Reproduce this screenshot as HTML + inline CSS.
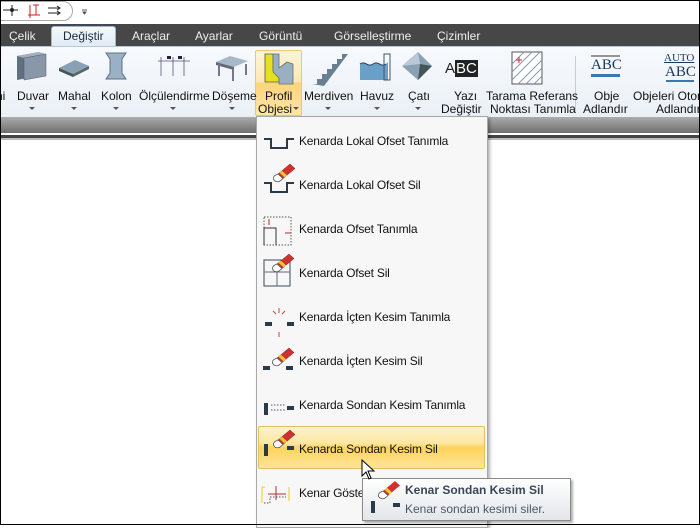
<!DOCTYPE html>
<html><head><meta charset="utf-8"><style>
*{margin:0;padding:0;box-sizing:border-box}
body{width:700px;height:525px;overflow:hidden;background:#fff;font-family:"Liberation Sans",sans-serif;font-size:12px;color:#1a1a1a;position:relative}
.abs{position:absolute}
#frame{position:absolute;left:0;top:0;width:700px;height:525px;border:1px solid #000;pointer-events:none;z-index:50}
.tab{position:absolute;top:29px;color:#eee;font-size:12px}
.lbl{position:absolute;text-align:center;font-size:12px;line-height:13px;color:#111;white-space:nowrap}
.arr{position:absolute;width:0;height:0;border-left:3px solid transparent;border-right:3px solid transparent;border-top:3px solid #555}
.mi{position:absolute;left:299px;font-size:12px;color:#111;white-space:nowrap;letter-spacing:-0.2px}
</style></head><body>
<div id="frame"></div>
<div class="abs" style="left:-10px;top:1px;width:83px;height:20px;border:1px solid #aaa;border-radius:10px;background:#fff"></div>
<svg class="abs" style="left:0;top:2px" width="90" height="20">
<g stroke="#222" fill="none"><line x1="3" y1="8" x2="18" y2="8"/><line x1="12" y1="3" x2="12" y2="14"/><circle cx="12" cy="8" r="1.5" fill="#222"/></g>
<g stroke="#c22" fill="none"><line x1="28" y1="13" x2="40" y2="13"/><line x1="30" y1="3" x2="30" y2="16"/><line x1="36" y1="3" x2="36" y2="13"/><line x1="33" y1="3" x2="39" y2="3"/></g>
<g stroke="#222" fill="none"><line x1="48" y1="6" x2="60" y2="6"/><line x1="48" y1="11" x2="60" y2="11"/><path d="M57 4l3 2-3 2M57 9l3 2-3 2"/></g>
<path d="M82 8h5M83 10h3l-1.5 2z" stroke="#555" fill="#555"/>
</svg>
<div class="abs" style="left:0;top:24px;width:700px;height:22px;background:#474747"></div>
<div class="abs" style="left:51px;top:26px;width:65px;height:21px;background:linear-gradient(#f4f8fc,#dfeaf5);border:1px solid #9eb6ce;border-bottom:none;border-radius:3px 3px 0 0"></div>
<div class="tab" style="left:9px">Çelik</div>
<div class="tab" style="left:63px;color:#1a2a40">Değiştir</div>
<div class="tab" style="left:132px">Araçlar</div>
<div class="tab" style="left:195px">Ayarlar</div>
<div class="tab" style="left:259px">Görüntü</div>
<div class="tab" style="left:334px">Görselleştirme</div>
<div class="tab" style="left:437px">Çizimler</div>
<div class="abs" style="left:0;top:46px;width:700px;height:71px;background:linear-gradient(#f7fafd,#eaf0f6);border-top:1px solid #b8c8d8"></div>
<div class="abs" style="left:255px;top:50px;width:47px;height:66px;border:1px solid #e8c870;border-radius:2px;background:linear-gradient(#fdf5d8 0%,#fbe9b0 48%,#fcd47a 50%,#fde7a8 100%)"></div>
<div class="abs" style="left:575px;top:56px;width:1px;height:56px;background:#c8ccd0"></div>
<svg class="abs" style="left:0;top:48px" width="700" height="40">
<path d="M17 8l22-4v24l-22 4z" fill="#607080"/><path d="M17 8l22-4 7 2-22 4z" fill="#a0b0c0"/><path d="M24 10l22-4v22l-22 4z" fill="#8898a8" stroke="#556" stroke-width=".5"/>
<path d="M59 20l16-8 14 6-16 8z" fill="#8aa0b4"/><path d="M59 20l14 6v3l-14-6z" fill="#455"/><path d="M73 26l16-8v3l-16 8z" fill="#566"/>
<path d="M106 5h20l-4 6v14l4 6h-20l4-6v-14z" fill="#9ab0c4" stroke="#607080"/>
<g stroke="#557" fill="none" stroke-width=".8"><line x1="158" y1="13" x2="190" y2="13"/><line x1="161" y1="9" x2="161" y2="28"/><line x1="173" y1="9" x2="173" y2="28"/><line x1="184" y1="9" x2="184" y2="28"/></g>
<rect x="167" y="8" width="4" height="3" fill="#224"/><rect x="178" y="8" width="4" height="3" fill="#224"/>
<path d="M216 14l14-6 18 5-14 6z" fill="#a8b8c8"/><path d="M216 14l18 5v3l-18-5z" fill="#667"/><rect x="218" y="16" width="2" height="12" fill="#778"/><rect x="232" y="21" width="2" height="12" fill="#778"/><rect x="245" y="16" width="2" height="11" fill="#778"/>
<path d="M265 6h8v16l6 6v6h-14z" fill="#e6e020" stroke="#555" stroke-width=".8"/><path d="M273 6h6v14l8-6 6 2v20h-14v-6l-6-6z" fill="#9ab0c0" stroke="#607080" stroke-width=".8"/>
<path d="M312 36h5v-5h5v-5h5v-5h5v-5h5v-5h5v-5h6l-24 32z" fill="#6a8090"/>
<path d="M360 16c5-4 8 4 13 0s8 4 13 0l2-2v18h-28z" fill="#6aa0c8"/><path d="M360 16c5-4 8 4 13 0s8 4 13 0" stroke="#246" fill="none"/><rect x="384" y="6" width="6" height="26" fill="none" stroke="#456"/>
<path d="M402 18l16-14 14 14-14 14z" fill="#8aa0b4"/><path d="M402 18l16-14 2 12z" fill="#b8c8d8"/><path d="M418 32l2-16 12 2z" fill="#455"/>
<rect x="512" y="4" width="30" height="32" fill="#fff" stroke="#555"/>
<g stroke="#8898b0"><line x1="512" y1="16" x2="524" y2="4"/><line x1="512" y1="24" x2="532" y2="4"/><line x1="512" y1="32" x2="540" y2="4"/><line x1="518" y1="36" x2="542" y2="12"/><line x1="526" y1="36" x2="542" y2="20"/><line x1="534" y1="36" x2="542" y2="28"/></g>
<path d="M516 12h6M519 9v6" stroke="#d22"/>
<rect x="591" y="26" width="29" height="3" fill="#3a78b0"/><line x1="591" y1="8" x2="620" y2="8" stroke="#333"/>
<rect x="666" y="32" width="28" height="2" fill="#3a78b0"/>
</svg>
<div class="abs" style="left:445px;top:60px;font-size:15px;color:#222">A<span style="background:#222;color:#fff;padding:0 1px">BC</span></div>
<div class="abs" style="left:591px;top:57px;font-size:15px;color:#1a3a60;font-family:'Liberation Serif',serif">ABC</div>
<div class="abs" style="left:664px;top:52px;font-size:11px;color:#1a3a60;font-family:'Liberation Serif',serif;text-decoration:underline">AUTO</div>
<div class="abs" style="left:665px;top:64px;font-size:15px;color:#1a3a60;font-family:'Liberation Serif',serif">ABC</div>
<div class="lbl" style="left:-4px;top:90px">ni</div>
<div class="lbl" style="left:17px;top:90px">Duvar</div><div class="arr" style="left:29px;top:107px"></div>
<div class="lbl" style="left:58px;top:90px">Mahal</div><div class="arr" style="left:71px;top:107px"></div>
<div class="lbl" style="left:101px;top:90px">Kolon</div><div class="arr" style="left:113px;top:107px"></div>
<div class="lbl" style="left:139px;top:90px">Ölçülendirme</div><div class="arr" style="left:170px;top:107px"></div>
<div class="lbl" style="left:212px;top:90px">Döşeme</div><div class="arr" style="left:229px;top:107px"></div>
<div class="lbl" style="left:265px;top:90px">Profil</div>
<div class="lbl" style="left:258px;top:103px">Objesi</div><div class="arr" style="left:293px;top:107px"></div>
<div class="lbl" style="left:304px;top:90px">Merdiven</div><div class="arr" style="left:325px;top:107px"></div>
<div class="lbl" style="left:360px;top:90px">Havuz</div><div class="arr" style="left:374px;top:107px"></div>
<div class="lbl" style="left:408px;top:90px">Çatı</div><div class="arr" style="left:415px;top:107px"></div>
<div class="lbl" style="left:454px;top:90px">Yazı</div>
<div class="lbl" style="left:441px;top:103px">Değiştir</div>
<div class="lbl" style="left:486px;top:90px">Tarama Referans</div>
<div class="lbl" style="left:490px;top:103px">Noktası Tanımla</div>
<div class="lbl" style="left:594px;top:90px">Obje</div>
<div class="lbl" style="left:583px;top:103px">Adlandır</div>
<div class="lbl" style="left:633px;top:90px">Objeleri Otomatik</div>
<div class="lbl" style="left:656px;top:103px">Adlandır</div>
<div class="abs" style="left:0;top:117px;width:700px;height:16px;background:linear-gradient(#acacac,#6e6e6e)"></div>
<div class="abs" style="left:0;top:135px;width:700px;height:3px;background:#444"></div>
<div class="abs" style="left:0;top:138px;width:700px;height:2px;background:#bbb"></div>
<div class="abs" style="left:256px;top:116px;width:232px;height:412px;background:#f7f7f7;border:1px solid #a8a8a8;box-shadow:2px 2px 3px rgba(0,0,0,.3)"></div>
<div class="abs" style="left:258px;top:426px;width:227px;height:43px;border:1px solid #e0c060;border-radius:2px;background:linear-gradient(#fdf3cc 0%,#fce8a0 40%,#fdd35a 50%,#fde49a 100%)"></div>
<svg class="abs" style="left:260px;top:120px" width="50" height="405">
<defs>
<g id="er">
<path d="M9 10l12-10 5 4.5-12 10z" fill="#d03030" stroke="#802020" stroke-width=".5"/>
<path d="M10.5 8.8l2.5-2 5 4.5-2.5 2z" fill="#e8c830"/>
<path d="M9 10l5 4.5-3 2.5c-2 1.5-5 .5-6-1s-.5-3.5 1-4.5z" fill="#fff" stroke="#555" stroke-width=".8"/>
</g>
</defs>
<g stroke="#2a3a4a" stroke-width="2" fill="none">
<path d="M4 19h7v9h16v-9h7"/>
<path d="M4 63h7v9h16v-9h7"/>
</g>
<use href="#er" transform="translate(9,44)"/>
<rect x="4" y="97" width="27" height="28" fill="none" stroke="#555" stroke-dasharray="1.5 1.5"/>
<path d="M4 125v-17h12v17" stroke="#333" fill="none"/><path d="M9 99v6M31 113h-6" stroke="#c22"/>
<rect x="4" y="140" width="26" height="26" fill="none" stroke="#3a4a5a"/><path d="M4 152h26M17 152v14" stroke="#667"/>
<use href="#er" transform="translate(8,134)"/>
<rect x="5" y="202" width="7" height="4" fill="#2a3a4a"/><rect x="27" y="202" width="7" height="4" fill="#2a3a4a"/>
<path d="M19 188v5M19 212v5M13 191l3 3M25 191l-3 3" stroke="#c44"/>
<rect x="3" y="246" width="7" height="4" fill="#2a3a4a"/><rect x="26" y="246" width="7" height="4" fill="#2a3a4a"/>
<use href="#er" transform="translate(8,228)"/>
<rect x="4" y="283" width="4" height="12" fill="#2a3a4a"/><rect x="27" y="286" width="7" height="4" fill="#2a3a4a"/><path d="M11 285h14M11 290h14" stroke="#556" stroke-dasharray="1.5 1.5"/>
<rect x="4" y="324" width="4" height="12" fill="#2a3a4a"/><rect x="27" y="326" width="7" height="4" fill="#2a3a4a"/>
<use href="#er" transform="translate(9,310)"/>
<path d="M2 367v16M2 367h3M29 367v14" stroke="#e0d020"/><path d="M8 374h18M16 366v14" stroke="#b03030"/><path d="M4 383h6v-6h16" stroke="#555" stroke-dasharray="1.5 1.5" fill="none"/>
</svg>
<div class="mi" style="top:134px">Kenarda Lokal Ofset Tanımla</div>
<div class="mi" style="top:178px">Kenarda Lokal Ofset Sil</div>
<div class="mi" style="top:222px">Kenarda Ofset Tanımla</div>
<div class="mi" style="top:266px">Kenarda Ofset Sil</div>
<div class="mi" style="top:310px">Kenarda İçten Kesim Tanımla</div>
<div class="mi" style="top:354px">Kenarda İçten Kesim Sil</div>
<div class="mi" style="top:398px">Kenarda Sondan Kesim Tanımla</div>
<div class="mi" style="top:442px">Kenarda Sondan Kesim Sil</div>
<div class="mi" style="top:486px">Kenar Göste</div>
<svg class="abs" style="left:361px;top:459px;z-index:10" width="14" height="22"><path d="M1 1v16l4-4 3 7 2-1-3-7h6z" fill="#fff" stroke="#000"/></svg>
<div class="abs" style="left:362px;top:478px;width:209px;height:43px;border:1px solid #8a8a8a;background:linear-gradient(#fff,#e4e6ea);box-shadow:2px 2px 2px rgba(0,0,0,.3)"></div>
<svg class="abs" style="left:370px;top:481px" width="36" height="36">
<path d="M13 10l12-10 5 4.5-12 10z" fill="#d03030"/><path d="M14.5 8.8l2.5-2 5 4.5-2.5 2z" fill="#e8c830"/>
<path d="M13 10l5 4.5-3 2.5c-2 1.5-5 .5-6-1s-.5-3.5 1-4.5z" fill="#fff" stroke="#555" stroke-width=".8"/>
<rect x="1" y="20" width="4" height="12" fill="#2a3a4a"/><rect x="23" y="22" width="7" height="4" fill="#2a3a4a"/></svg>
<div class="abs" style="left:405px;top:483px;font-size:12px;font-weight:bold;color:#3a4658">Kenar Sondan Kesim Sil</div>
<div class="abs" style="left:405px;top:502px;font-size:12px;color:#4a5668">Kenar sondan kesimi siler.</div>
</body></html>
